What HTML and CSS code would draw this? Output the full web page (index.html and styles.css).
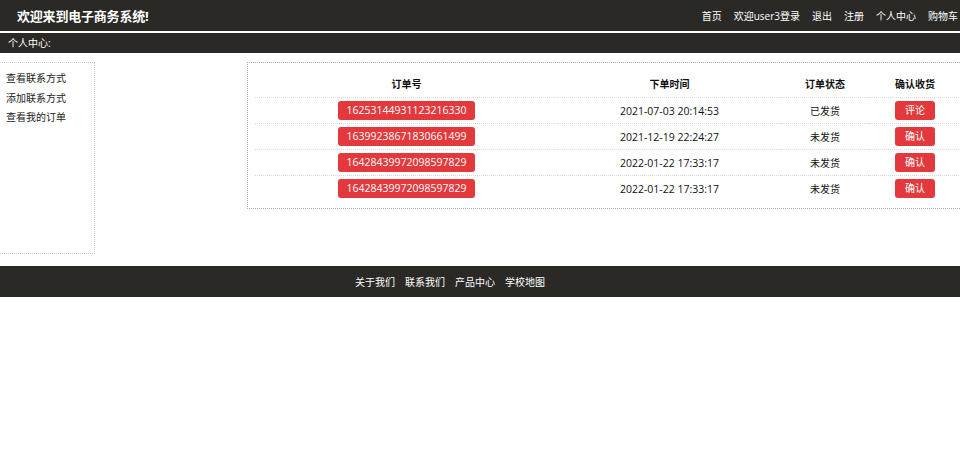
FILE: index.html
```html
<!DOCTYPE html>
<html lang="zh-CN">
<head>
<meta charset="utf-8">
<title>个人中心</title>
<link rel="stylesheet" href="styles.css">
</head>
<body>
<header class="top">
  <h1 class="title">欢迎来到电子商务系统!</h1>
  <nav class="nav">
    <a href="#">首页</a>
    <a href="#">欢迎user3登录</a>
    <a href="#">退出</a>
    <a href="#">注册</a>
    <a href="#">个人中心</a>
    <a href="#">购物车</a>
  </nav>
</header>
<div class="subbar">个人中心:</div>
<main class="main">
  <aside class="side">
    <a href="#">查看联系方式</a>
    <a href="#">添加联系方式</a>
    <a href="#">查看我的订单</a>
  </aside>
  <section class="content">
    <table class="orders">
      <colgroup>
        <col class="c1"><col class="c2"><col class="c3"><col class="c4">
      </colgroup>
      <thead>
        <tr><th>订单号</th><th>下单时间</th><th>订单状态</th><th>确认收货</th></tr>
      </thead>
      <tbody>
        <tr><td><span class="btn wide">16253144931123216330</span></td><td>2021-07-03 20:14:53</td><td class="st">已发货</td><td><span class="btn">评论</span></td></tr>
        <tr><td><span class="btn wide">16399238671830661499</span></td><td>2021-12-19 22:24:27</td><td class="st">未发货</td><td><span class="btn">确认</span></td></tr>
        <tr><td><span class="btn wide">16428439972098597829</span></td><td>2022-01-22 17:33:17</td><td class="st">未发货</td><td><span class="btn">确认</span></td></tr>
        <tr><td><span class="btn wide">16428439972098597829</span></td><td>2022-01-22 17:33:17</td><td class="st">未发货</td><td><span class="btn">确认</span></td></tr>
      </tbody>
    </table>
  </section>
</main>
<footer class="foot">
  <a href="#">关于我们</a>
  <a href="#">联系我们</a>
  <a href="#">产品中心</a>
  <a href="#">学校地图</a>
</footer>
</body>
</html>
```

FILE: styles.css
```css
html, body {
  margin: 0;
  padding: 0;
  overflow: hidden;
  background: #fff;
}
body {
  font-family: "Open Sans", "Noto Sans CJK SC", sans-serif;
  font-size: 10px;
  color: #222;
}
a {
  color: inherit;
  text-decoration: none;
}
.top {
  height: 31px;
  background: #2a2925;
  display: flex;
  align-items: center;
  justify-content: space-between;
  padding: 0 2px 0 17px;
  margin-bottom: 2px;
}
.title {
  margin: 0;
  font-size: 13px;
  font-weight: bold;
  color: #fff;
  letter-spacing: -0.2px;
}
.nav {
  display: flex;
  gap: 12px;
  color: #fff;
  font-size: 10px;
}
.subbar {
  height: 20px;
  line-height: 20px;
  background: #2a2925;
  color: #fff;
  padding-left: 8px;
  font-size: 10px;
}
.main {
  display: flex;
  align-items: flex-start;
  gap: 152px;
  margin-top: 9px;
  width: 1000px;
}
.side {
  box-sizing: content-box;
  width: 88px;
  height: 184px;
  border: 1px dotted #c8c8c8;
  border-left: none;
  padding: 6px 0 0 12px;
  margin-left: -6px;
  display: flex;
  flex-direction: column;
}
.side a {
  line-height: 19.5px;
  color: #222;
}
.content {
  border: 1px dotted #aaa;
  padding: 8px 0 7px 7px;
  width: 740px;
}
.orders {
  border-collapse: collapse;
  table-layout: fixed;
  width: 706px;
}
.c1 { width: 303px; }
.c2 { width: 223px; }
.c3 { width: 88px; }
.c4 { width: 92px; }
.orders th,
.orders td {
  height: 25px;
  padding: 0;
  text-align: center;
  vertical-align: middle;
  color: #111;
  font-size: 10.5px;
}
.orders th {
  font-weight: bold;
  font-size: 10px;
  padding-bottom: 1px;
}
.orders td {
  border-top: 1px dotted #d8d8d8;
}
.orders td.st {
  font-size: 10px;
}
.btn {
  display: inline-block;
  background: #e4393c;
  color: #fff;
  border-radius: 3px;
  height: 19px;
  line-height: 19px;
  padding: 0 10px;
  font-size: 10px;
}
.btn.wide {
  width: 137px;
  padding: 0;
  font-size: 10.5px;
  box-sizing: border-box;
}
.foot {
  margin-top: 12px;
  height: 31px;
  background: #2a2925;
  color: #fff;
  display: flex;
  align-items: center;
  justify-content: center;
  gap: 10px;
  padding-right: 60px;
  font-size: 10px;
}
```
